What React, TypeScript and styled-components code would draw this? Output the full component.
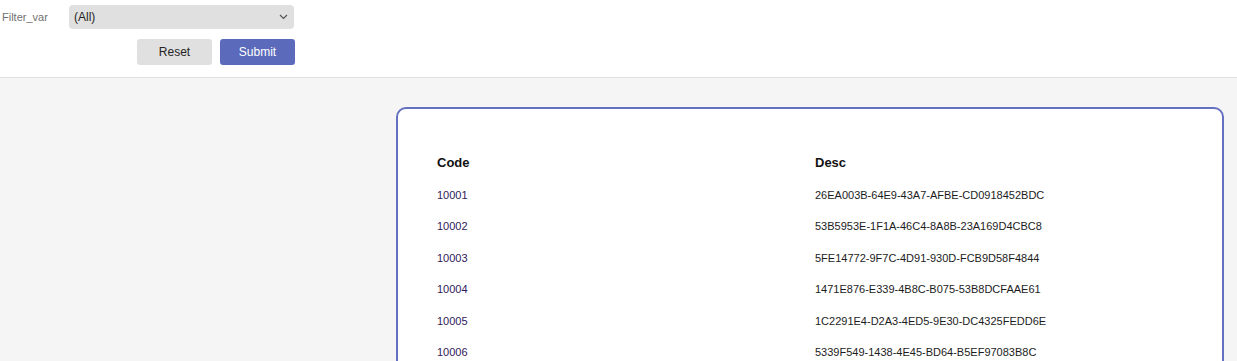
import React from "react";
import styled, { createGlobalStyle } from "styled-components";

const Global = createGlobalStyle`
  html, body { margin: 0; padding: 0; background: #f5f5f5; }
  body { font-family: "Liberation Sans", Arial, sans-serif; overflow: hidden; }
`;

const Header = styled.header`
  background: #ffffff;
  border-bottom: 1px solid #e1e1e1;
  display: flex;
  flex-direction: column;
  padding-top: 5px;
  box-sizing: border-box;
  height: 78px;
`;

const FilterRow = styled.div`
  display: flex;
  align-items: center;
  width: 294px;
`;

const Label = styled.label`
  width: 69px;
  padding-left: 2px;
  box-sizing: border-box;
  font-size: 11px;
  color: #717171;
`;

const Select = styled.div`
  flex: 1;
  height: 24px;
  background: #e0e0e0;
  border-radius: 4px;
  display: flex;
  align-items: center;
  justify-content: space-between;
  padding: 0 6px 0 5px;
  font-size: 12px;
  color: #252423;
`;

const ButtonRow = styled.div`
  display: flex;
  gap: 8px;
  margin-top: 10px;
  padding-left: 137px;
`;

const Button = styled.button<{ $primary?: boolean }>`
  width: 75px;
  height: 26px;
  border: none;
  border-radius: 3px;
  font-family: "Liberation Sans", Arial, sans-serif;
  font-size: 12px;
  background: ${(p) => (p.$primary ? "#5b6abb" : "#e0e0e0")};
  color: ${(p) => (p.$primary ? "#ffffff" : "#252423")};
  padding: 0;
`;

const Main = styled.main`
  padding: 29px 13px 0 396px;
`;

const Card = styled.section`
  background: #ffffff;
  border: 2px solid #6470c0;
  border-radius: 10px;
  padding: 44px 39px 40px;
  min-height: 400px;
`;

const Table = styled.div`
  display: grid;
  grid-template-columns: 378px 1fr;
`;

const HeadCell = styled.div`
  font-size: 13px;
  font-weight: 700;
  color: #111;
  height: 20px;
  line-height: 20px;
  margin-bottom: 16px;
`;

const Cell = styled.div<{ $code?: boolean }>`
  font-size: 11px;
  color: ${(p) => (p.$code ? "#30205a" : "#1c1c1c")};
  height: 31.45px;
  line-height: 13px;
`;

const rows = [
  ["10001", "26EA003B-64E9-43A7-AFBE-CD0918452BDC"],
  ["10002", "53B5953E-1F1A-46C4-8A8B-23A169D4CBC8"],
  ["10003", "5FE14772-9F7C-4D91-930D-FCB9D58F4844"],
  ["10004", "1471E876-E339-4B8C-B075-53B8DCFAAE61"],
  ["10005", "1C2291E4-D2A3-4ED5-9E30-DC4325FEDD6E"],
  ["10006", "5339F549-1438-4E45-BD64-B5EF97083B8C"],
];

export default function App() {
  return (
    <>
      <Global />
      <Header>
        <FilterRow>
          <Label>Filter_var</Label>
          <Select>
            <span>(All)</span>
            <svg width="9" height="6" viewBox="0 0 9 6">
              <path d="M1 1 L4.5 4.5 L8 1" fill="none" stroke="#555" strokeWidth="1.2" />
            </svg>
          </Select>
        </FilterRow>
        <ButtonRow>
          <Button>Reset</Button>
          <Button $primary>Submit</Button>
        </ButtonRow>
      </Header>
      <Main>
        <Card>
          <Table>
            <HeadCell>Code</HeadCell>
            <HeadCell>Desc</HeadCell>
            {rows.map(([c, d]) => (
              <React.Fragment key={c}>
                <Cell $code>{c}</Cell>
                <Cell>{d}</Cell>
              </React.Fragment>
            ))}
          </Table>
        </Card>
      </Main>
    </>
  );
}
